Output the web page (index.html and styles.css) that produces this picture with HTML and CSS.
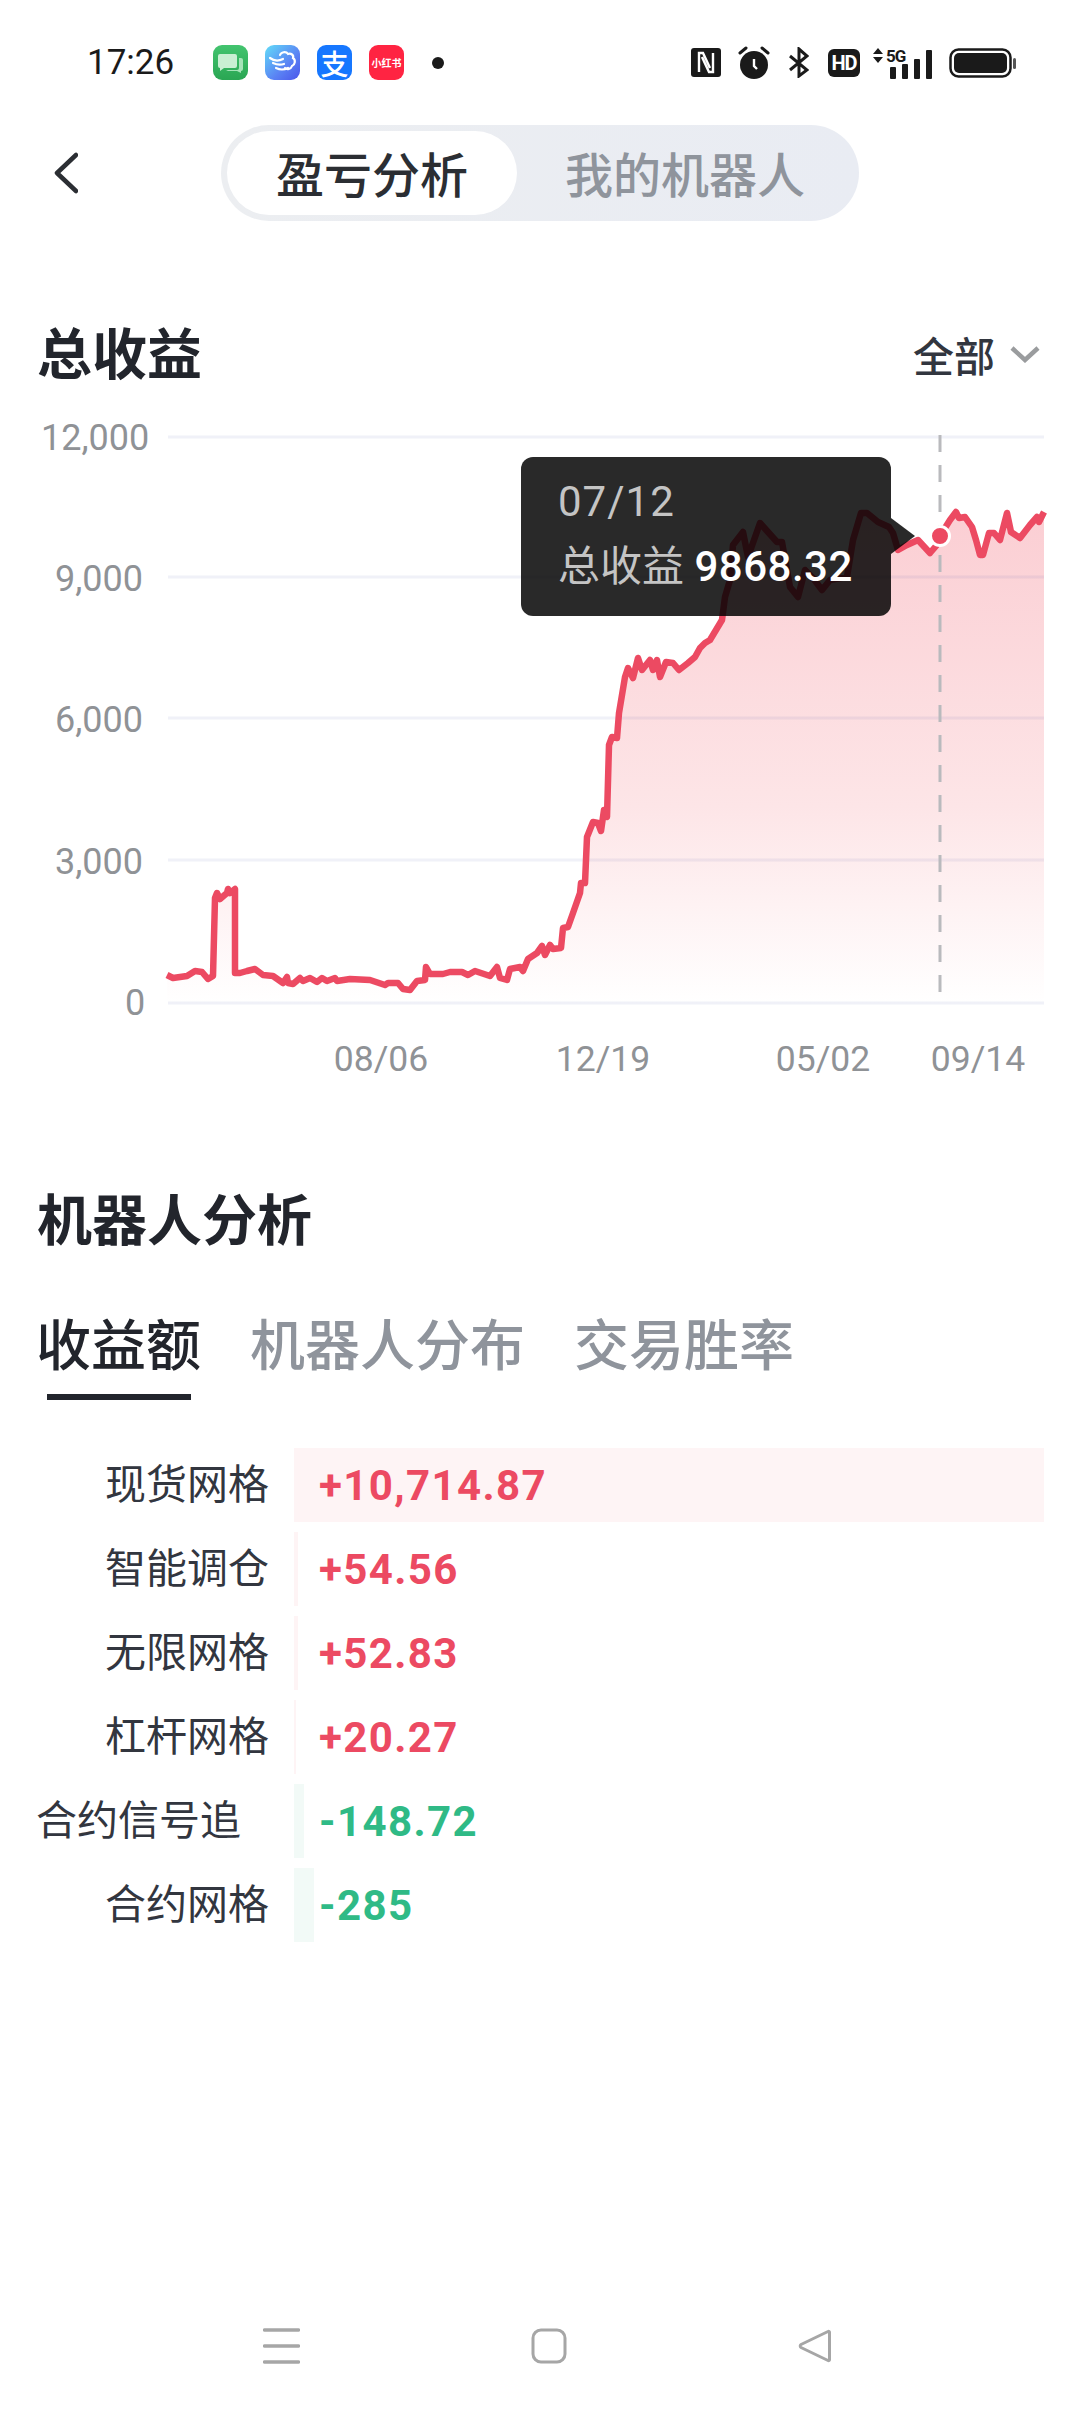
FILE: index.html
```html
<!DOCTYPE html>
<html lang="zh-CN">
<head>
  <meta charset="UTF-8">
  <meta name="viewport" content="width=device-width, initial-scale=1.0">
  <title>盈亏分析</title>
  <link rel="stylesheet" href="styles.css">
</head>
<body>

  <!-- Status bar -->
  <div class="statusbar">
    <span class="clock">17:26</span>
    <div class="app-icons">
      <div class="app-icon app-messages">
        <svg width="35" height="35" viewBox="0 0 35 35">
          <path d="M7 9h15a2 2 0 0 1 2 2v10a2 2 0 0 1-2 2h-11l-4 3v-3a2 2 0 0 1-2-2V11a2 2 0 0 1 2-2z" fill="#c9efd3"/>
          <path d="M26 13h2a2 2 0 0 1 2 2v9a2 2 0 0 1-2 2v2l-4-2h-9l-2-1h11a2 2 0 0 0 2-2z" fill="#a5e4b8"/>
        </svg>
      </div>
      <div class="app-icon app-cloud">
        <svg width="35" height="35" viewBox="0 0 35 35" fill="none" stroke="#fff" stroke-linecap="round">
          <path d="M5 13c4 3 9 3 13 1M8 18c4 2 8 2 11 1M11 23c4 2 8 2 12 0" stroke-width="2.2"/>
          <path d="M15 10c1-3 6-4 8-1 3-1 6 1 5 4 3 2 2 7-1 8-1 3-5 4-7 2" stroke-width="2.2"/>
        </svg>
      </div>
      <div class="app-icon app-alipay">支</div>
      <div class="app-icon app-red">小红书</div>
      <span class="notif-dot"></span>
    </div>
    <div class="status-right">
      <svg class="st-nfc" width="30" height="29" viewBox="0 0 30 29">
        <rect width="30" height="29" rx="3" fill="#1a1a1a"/>
        <path d="M8 24V5h4l7 15M22 5v19h-4l-7-15" fill="none" stroke="#fff" stroke-width="2.4"/>
      </svg>
      <svg class="st-alarm" width="32" height="33" viewBox="0 0 32 33">
        <circle cx="16" cy="19" r="14" fill="#1a1a1a"/>
        <path d="M2 7l6-5M30 7l-6-5" stroke="#1a1a1a" stroke-width="3" stroke-linecap="round"/>
        <path d="M16 13v7l3 3" fill="none" stroke="#fff" stroke-width="2.4"/>
      </svg>
      <svg class="st-bt" width="21" height="31" viewBox="0 0 21 31">
        <path d="M2 9l17 14-8 6V2l8 7L2 23" fill="none" stroke="#1a1a1a" stroke-width="3"/>
      </svg>
      <svg class="st-hd" width="32" height="28" viewBox="0 0 32 28">
        <rect width="32" height="28" rx="6" fill="#1a1a1a"/>
        <text x="16" y="21" class="st-hd-text">HD</text>
      </svg>
      <svg class="st-signal" width="59" height="32" viewBox="0 0 59 32">
        <path d="M0 7l5-6 5 6zM0 10h10l-5 6z" fill="#1a1a1a"/>
        <text x="13" y="15" class="st-5g">5G</text>
        <rect x="17" y="20" width="6" height="12" rx="1" fill="#1a1a1a"/>
        <rect x="29" y="17" width="6" height="15" rx="1" fill="#1a1a1a"/>
        <rect x="41" y="12" width="6" height="20" rx="1" fill="#1a1a1a"/>
        <rect x="53" y="3" width="6" height="29" rx="1" fill="#1a1a1a"/>
      </svg>
      <svg class="st-batt" width="67" height="30" viewBox="0 0 67 30">
        <rect x="1.5" y="1.5" width="60" height="27" rx="8" fill="none" stroke="#1a1a1a" stroke-width="2.5"/>
        <rect x="5" y="5" width="53" height="20" rx="5" fill="#1a1a1a"/>
        <rect x="64" y="10" width="3" height="11" rx="1.5" fill="#555"/>
      </svg>
    </div>
  </div>

  <!-- Top nav with segmented switch -->
  <div class="topnav">
    <svg class="back" width="24" height="42" viewBox="0 0 24 42">
      <path d="M22 3L3 21l19 18" fill="none" stroke="#2b2e33" stroke-width="4.5" stroke-linecap="round" stroke-linejoin="round"/>
    </svg>
    <div class="segment">
      <div class="segment-item segment-on">盈亏分析</div>
      <div class="segment-item">我的机器人</div>
    </div>
  </div>

  <!-- Total profit -->
  <div class="title-row">
    <h2 class="title">总收益</h2>
    <div class="range">
      <span>全部</span>
      <svg width="30" height="18" viewBox="0 0 30 18">
        <path d="M2 3l13 12L28 3" fill="none" stroke="#9a9c9e" stroke-width="4.5"/>
      </svg>
    </div>
  </div>

  <div class="chart">
    <svg width="1080" height="680" viewBox="0 410 1080 680">
      <defs>
        <linearGradient id="areaFill" x1="0" y1="510" x2="0" y2="1003" gradientUnits="userSpaceOnUse">
          <stop offset="0" stop-color="#fbced3"/>
          <stop offset="0.6" stop-color="#fde5e7"/>
          <stop offset="1" stop-color="#ffffff"/>
        </linearGradient>
      </defs>

      <polygon fill="url(#areaFill)" points="167,1003 167,975 173,978 187,976 195,971 202,972 208,979 213,976 215,898 217,893 220,899 227,893 228,889 230,893 235,889 235,973 240,973 247,971 255,969 263,975 273,976 283,983 287,977 288,983 293,984 300,978 303,981 310,978 317,982 322,978 327,981 335,978 337,981 350,979 370,980 385,985 388,983 398,983 403,989 410,990 417,981 425,980 426,967 430,974 443,974 450,972 462,972 468,975 475,971 490,976 497,967 500,978 507,980 510,969 520,967 523,971 528,959 537,953 542,946 545,955 550,945 553,949 561,948 563,928 568,927 573,913 580,893 581,883 585,883 587,837 593,822 598,823 601,831 604,810 607,817 609,745 612,737 617,738 619,713 625,677 628,668 633,678 638,658 642,670 650,660 653,670 657,660 660,677 666,662 673,663 679,670 688,663 695,657 700,648 705,643 710,640 722,620 725,597 730,580 733,545 743,532 748,557 760,523 768,532 777,542 782,542 790,587 798,597 805,570 813,578 822,590 830,580 847,577 853,540 861,513 867,513 878,522 889,527 893,533 898,550 907,545 918,540 930,553 936,546 940,536 950,520 956,512 959,518 965,517 972,527 976,540 980,555 983,555 989,533 994,533 1000,540 1007,513 1011,532 1020,538 1030,525 1037,517 1039,522 1044,512 1044,1003"/>

      <!-- grid -->
      <g class="grid">
        <line x1="168" y1="437" x2="1044" y2="437"/>
        <line x1="168" y1="577" x2="1044" y2="577"/>
        <line x1="168" y1="718" x2="1044" y2="718"/>
        <line x1="168" y1="860" x2="1044" y2="860"/>
        <line x1="168" y1="1003" x2="1044" y2="1003"/>
      </g>

      <text class="axis" x="41" y="450">12,000</text>
      <text class="axis" x="55" y="591">9,000</text>
      <text class="axis" x="55" y="732">6,000</text>
      <text class="axis" x="55" y="874">3,000</text>
      <text class="axis" x="125" y="1015">0</text>

      <text class="axis axis-x" x="381" y="1071">08/06</text>
      <text class="axis axis-x" x="603" y="1071">12/19</text>
      <text class="axis axis-x" x="823" y="1071">05/02</text>
      <text class="axis axis-x" x="978" y="1071">09/14</text>

      <line class="crosshair" x1="940" y1="435" x2="940" y2="993"/>

      <polyline class="profit-line" points="167,975 173,978 187,976 195,971 202,972 208,979 213,976 215,898 217,893 220,899 227,893 228,889 230,893 235,889 235,973 240,973 247,971 255,969 263,975 273,976 283,983 287,977 288,983 293,984 300,978 303,981 310,978 317,982 322,978 327,981 335,978 337,981 350,979 370,980 385,985 388,983 398,983 403,989 410,990 417,981 425,980 426,967 430,974 443,974 450,972 462,972 468,975 475,971 490,976 497,967 500,978 507,980 510,969 520,967 523,971 528,959 537,953 542,946 545,955 550,945 553,949 561,948 563,928 568,927 573,913 580,893 581,883 585,883 587,837 593,822 598,823 601,831 604,810 607,817 609,745 612,737 617,738 619,713 625,677 628,668 633,678 638,658 642,670 650,660 653,670 657,660 660,677 666,662 673,663 679,670 688,663 695,657 700,648 705,643 710,640 722,620 725,597 730,580 733,545 743,532 748,557 760,523 768,532 777,542 782,542 790,587 798,597 805,570 813,578 822,590 830,580 847,577 853,540 861,513 867,513 878,522 889,527 893,533 898,550 907,545 918,540 930,553 936,546 940,536 950,520 956,512 959,518 965,517 972,527 976,540 980,555 983,555 989,533 994,533 1000,540 1007,513 1011,532 1020,538 1030,525 1037,517 1039,522 1044,512"/>

      <circle cx="940" cy="536" r="9.5" fill="#ec4a62" stroke="#fff" stroke-width="3"/>
    </svg>

    <div class="tooltip">
      <div class="tooltip-date">07/12</div>
      <div class="tooltip-row">总收益 <b>9868.32</b></div>
    </div>
  </div>

  <!-- Bot analysis -->
  <h2 class="title section-title">机器人分析</h2>

  <div class="tabs">
    <div class="tab tab-on">收益额</div>
    <div class="tab">机器人分布</div>
    <div class="tab">交易胜率</div>
  </div>

  <div class="rows">
    <div class="row">
      <div class="row-label">现货网格</div>
      <div class="row-track">
        <div class="row-bar bar-up" style="width: 750px"></div>
        <span class="row-value up">+10,714.87</span>
      </div>
    </div>
    <div class="row">
      <div class="row-label">智能调仓</div>
      <div class="row-track">
        <div class="row-bar bar-up" style="width: 4px"></div>
        <span class="row-value up">+54.56</span>
      </div>
    </div>
    <div class="row">
      <div class="row-label">无限网格</div>
      <div class="row-track">
        <div class="row-bar bar-up" style="width: 4px"></div>
        <span class="row-value up">+52.83</span>
      </div>
    </div>
    <div class="row">
      <div class="row-label">杠杆网格</div>
      <div class="row-track">
        <div class="row-bar bar-up" style="width: 2px"></div>
        <span class="row-value up">+20.27</span>
      </div>
    </div>
    <div class="row">
      <div class="row-label row-label-left">合约信号追</div>
      <div class="row-track">
        <div class="row-bar bar-down" style="width: 10px"></div>
        <span class="row-value down">-148.72</span>
      </div>
    </div>
    <div class="row">
      <div class="row-label">合约网格</div>
      <div class="row-track">
        <div class="row-bar bar-down" style="width: 20px"></div>
        <span class="row-value down">-285</span>
      </div>
    </div>
  </div>

  <!-- Android nav bar -->
  <div class="navbar">
    <svg width="37" height="36" viewBox="0 0 37 36">
      <path d="M1.5 2h34M1.5 18h34M1.5 34h34" stroke="#a6a6a6" stroke-width="3.4" stroke-linecap="round"/>
    </svg>
    <svg width="36" height="36" viewBox="0 0 36 36">
      <rect x="2" y="2" width="32" height="32" rx="8" fill="none" stroke="#a6a6a6" stroke-width="3"/>
    </svg>
    <svg width="33" height="36" viewBox="0 0 33 36">
      <path d="M30 3.500a1 1 0 0 1 1.500 1v27a1 1 0 0 1-1.500 1L3 19.500a1.800 1.800 0 0 1 0-3z" fill="none" stroke="#a6a6a6" stroke-width="3" stroke-linejoin="round"/>
    </svg>
  </div>

</body>
</html>
```

FILE: styles.css
```css
/* Base */
* {
  box-sizing: border-box;
}

body {
  margin: 0;
  width: 1080px;
  min-height: 2412px;
  display: flex;
  flex-direction: column;
  background-color: #fff;
  color: #22252c;
  font-family: Roboto, "Noto Sans CJK SC", sans-serif;
}

/* Status bar */
.statusbar {
  height: 125px;
  display: flex;
  align-items: center;
  padding-left: 87px;
  color: #1a1a1a;
}

.clock {
  width: 126px;
  font-size: 35px;
}

.app-icons {
  display: flex;
  align-items: center;
  gap: 17px;
}

.app-icon {
  width: 35px;
  height: 35px;
  border-radius: 9px;
  display: flex;
  align-items: center;
  justify-content: center;
  color: #fff;
  overflow: hidden;
}

.app-messages {
  background: linear-gradient(#43c46f, #2aa653);
}

.app-cloud {
  background: linear-gradient(135deg, #62dcf8, #5a82f4 60%, #4a55ea);
}

.app-alipay {
  background-color: #1677ff;
  font-size: 28px;
  font-weight: 500;
}

.app-red {
  background-color: #ff2442;
  font-size: 10px;
  font-weight: 700;
  white-space: nowrap;
}

.notif-dot {
  width: 12px;
  height: 12px;
  margin-left: 11px;
  border-radius: 50%;
  background-color: #1a1a1a;
}

.status-right {
  display: flex;
  align-items: center;
  margin-left: 247px;
  height: 34px;
}

.st-alarm {
  margin-left: 17px;
}

.st-bt {
  margin-left: 18px;
}

.st-hd {
  margin-left: 19px;
}

.st-signal {
  margin-left: 13px;
}

.st-batt {
  margin-left: 17px;
}

.st-hd-text {
  font-size: 20px;
  font-weight: 700;
  fill: #fff;
  text-anchor: middle;
  letter-spacing: -1px;
}

.st-5g {
  font-size: 17px;
  font-weight: 700;
  fill: #1a1a1a;
  letter-spacing: -1px;
}

/* Top nav */
.topnav {
  height: 96px;
  display: flex;
  align-items: center;
  padding-left: 54px;
}

.segment {
  margin-left: 143px;
  width: 638px;
  height: 96px;
  padding: 6px;
  display: flex;
  border-radius: 48px;
  background: linear-gradient(90deg, #eceef1, #e9ecf3);
}

.segment-item {
  flex: 1;
  display: flex;
  align-items: center;
  justify-content: center;
  padding-bottom: 2px;
  font-size: 48px;
  color: #8f949c;
  font-weight: 500;
}

.segment-on {
  flex: 0 0 290px;
  border-radius: 42px;
  background-color: #fff;
  color: #2b2e33;
}

/* Headings */
.title {
  margin: 0;
  font-size: 55px;
  line-height: 80px;
  font-weight: 700;
  color: #22252c;
}

.title-row {
  margin-top: 94px;
  padding: 0 40px 0 37px;
  display: flex;
  align-items: center;
  justify-content: space-between;
}

.range {
  display: flex;
  align-items: center;
  gap: 15px;
  padding-bottom: 2px;
  font-size: 41px;
  font-weight: 500;
  color: #32363f;
}

/* Chart */
.chart {
  position: relative;
  height: 680px;
  margin-top: 15px;
}

.chart svg {
  display: block;
}

.grid line {
  stroke: rgba(70, 80, 170, 0.08);
  stroke-width: 3;
}

.axis {
  font-size: 36px;
  fill: #8f9296;
}

.axis-x {
  font-size: 35.500px;
  text-anchor: middle;
}

.crosshair {
  stroke: #b9babd;
  stroke-width: 3;
  stroke-dasharray: 17 13;
}

.profit-line {
  fill: none;
  stroke: #ec4a62;
  stroke-width: 6.500;
  stroke-linejoin: round;
}

.tooltip {
  position: absolute;
  left: 521px;
  top: 47px;
  width: 370px;
  height: 159px;
  padding: 18px 0 0 37px;
  border-radius: 12px;
  background-color: rgba(0, 0, 0, 0.84);
  color: #c4c4c4;
  font-size: 42px;
}

.tooltip::after {
  content: "";
  position: absolute;
  left: 100%;
  top: 61px;
  border-left: 24px solid rgba(0, 0, 0, 0.84);
  border-top: 18px solid transparent;
  border-bottom: 18px solid transparent;
}

.tooltip-date {
  line-height: 54px;
  letter-spacing: 1px;
}

.tooltip-row {
  line-height: 76px;
  white-space: nowrap;
}

.tooltip-row b {
  font-weight: 500;
  color: #fff;
  letter-spacing: 0.5px;
}

/* Bot analysis */
.section-title {
  margin-top: 91px;
  padding-left: 37px;
}

.tabs {
  margin-top: 45px;
  height: 94px;
  padding-left: 36px;
  display: flex;
  gap: 49px;
}

.tab {
  font-size: 55px;
  line-height: 80px;
  font-weight: 500;
  color: #8f949c;
  display: flex;
  flex-direction: column;
  align-items: center;
}

.tab-on {
  color: #22252c;
}

.tab-on::after {
  content: "";
  width: 144px;
  height: 6px;
  margin-top: 8px;
  background-color: #22252c;
}

.rows {
  margin-top: 48px;
  padding: 0 36px 0 36px;
}

.row {
  height: 74px;
  margin-bottom: 10px;
  display: flex;
}

.row-label {
  width: 233px;
  font-size: 41px;
  line-height: 74px;
  text-align: right;
  color: #32363f;
  white-space: nowrap;
}

.row-label-left {
  text-align: left;
}

.row-track {
  position: relative;
  flex: 1;
  margin-left: 25px;
  display: flex;
  align-items: center;
  padding-left: 25px;
}

.row-bar {
  position: absolute;
  left: 0;
  top: 0;
  bottom: 0;
}

.bar-up {
  background-color: #fef4f5;
}

.bar-down {
  background-color: #f2faf7;
}

.row-value {
  position: relative;
  font-size: 42px;
  font-weight: 700;
  letter-spacing: 1.400px;
}

.up {
  color: #ec4a62;
}

.down {
  color: #2fba86;
}

/* Android nav bar */
.navbar {
  margin-top: auto;
  padding: 0 249px 48px 263px;
  display: flex;
  justify-content: space-between;
}
```
